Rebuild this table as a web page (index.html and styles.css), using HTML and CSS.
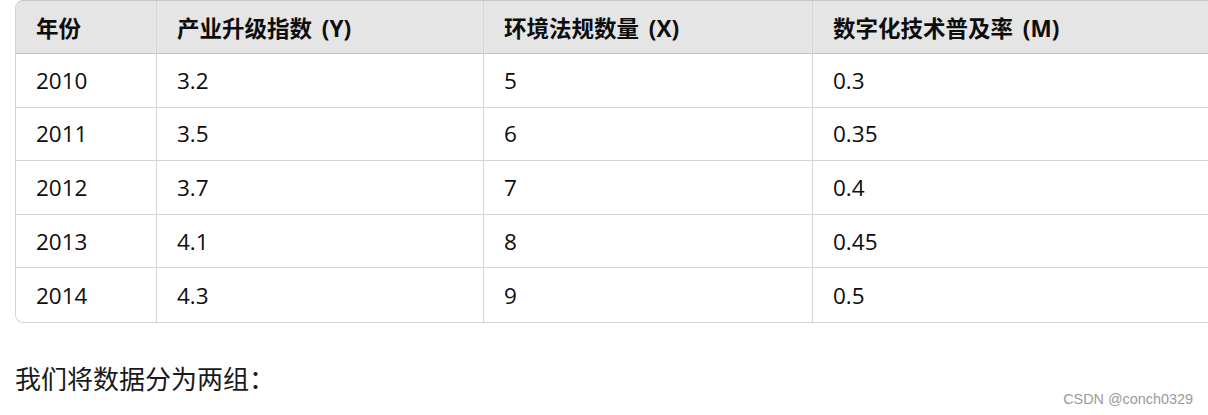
FILE: index.html
```html
<!DOCTYPE html>
<html lang="zh-CN">
<head>
<meta charset="utf-8">
<link rel="stylesheet" href="styles.css">
</head>
<body>
<div class="page">
  <div class="table-wrap">
    <table class="data">
      <thead>
        <tr><th class="c1">年份</th><th class="c2">产业升级指数 (Y)</th><th class="c3">环境法规数量 (X)</th><th class="c4">数字化技术普及率 (M)</th></tr>
      </thead>
      <tbody>
        <tr><td>2010</td><td>3.2</td><td>5</td><td>0.3</td></tr>
        <tr><td>2011</td><td>3.5</td><td>6</td><td>0.35</td></tr>
        <tr><td>2012</td><td>3.7</td><td>7</td><td>0.4</td></tr>
        <tr><td>2013</td><td>4.1</td><td>8</td><td>0.45</td></tr>
        <tr><td>2014</td><td>4.3</td><td>9</td><td>0.5</td></tr>
      </tbody>
    </table>
  </div>
  <p class="text">我们将数据分为两组：</p>
  <div class="watermark">CSDN @conch0329</div>
</div>
</body>
</html>
```
FILE: styles.css
```css
html, body {
  margin: 0;
  padding: 0;
  background: #ffffff;
}
.page {
  position: relative;
  width: 1208px;
  height: 415px;
  overflow: hidden;
  font-family: "Open Sans", "Noto Sans CJK SC", sans-serif;
  color: #0d0d0d;
}
.table-wrap {
  padding-left: 15px;
}
.data {
  width: 1260px;
  border-collapse: separate;
  border-spacing: 0;
  border: 1px solid #d4d4d4;
  border-top-color: #c6c6c6;
  border-radius: 8px;
  overflow: hidden;
  table-layout: fixed;
  font-size: 22.5px;
}
.data th, .data td {
  text-align: left;
  padding: 0 0 0 20px;
  height: 53.6px;
  box-sizing: border-box;
  border-right: 1px solid #d4d4d4;
  border-bottom: 1px solid #d4d4d4;
  font-weight: 400;
  white-space: nowrap;
}
.data th {
  background: #e5e5e5;
  font-weight: 700;
  border-bottom-color: #c2c2c2;
  height: 53px;
  word-spacing: 4px;
}
.data tbody tr:last-child td {
  border-bottom: none;
}
.data th.c1 { width: 141px; }
.data th.c2 { width: 327px; }
.data th.c3 { width: 329px; }
.data th.c4 { border-right: none; }
.data td:last-child { border-right: none; }
.text {
  margin: 38px 0 0 15px;
  font-size: 26px;
  line-height: 36px;
  color: #1a1a1a;
}
.watermark {
  position: absolute;
  right: 15px;
  top: 391px;
  font-family: "Liberation Sans", Arial, sans-serif;
  font-size: 14.4px;
  color: #9a9a9a;
}
```
